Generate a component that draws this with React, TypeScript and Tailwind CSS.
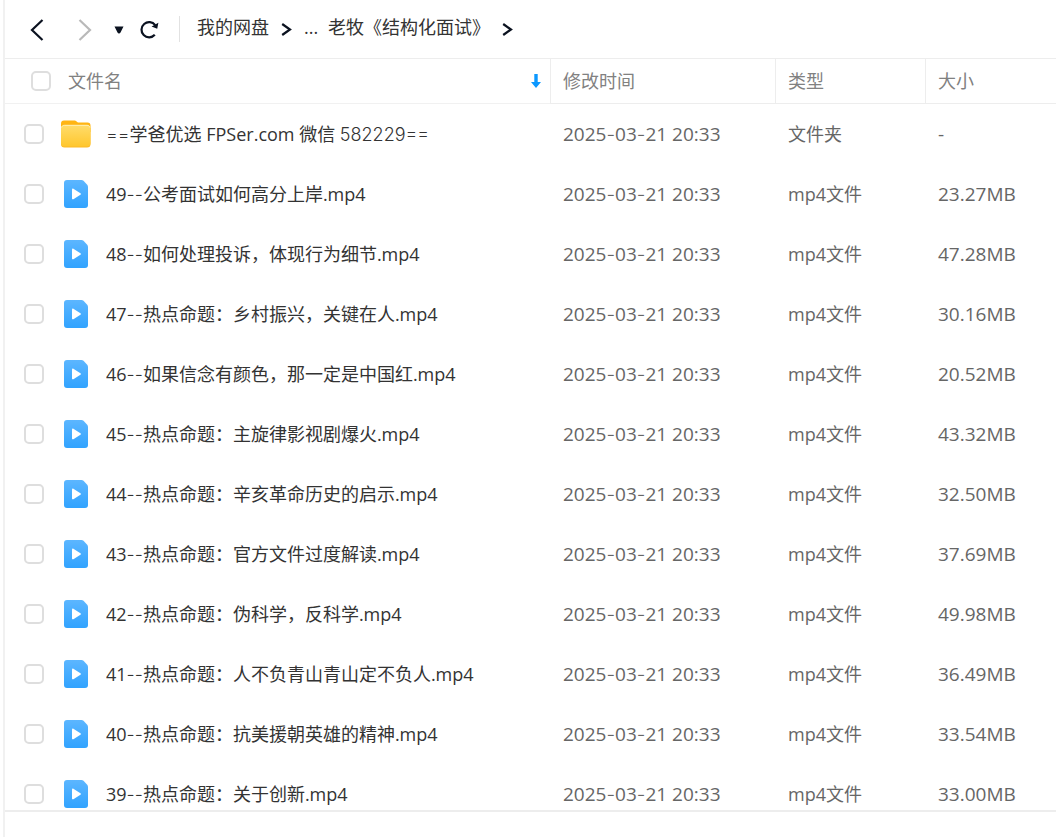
import { Fragment } from "react";

type FileRow = {
  name: string;
  time: string;
  type: string;
  size: string;
  folder?: boolean;
};

const TIME = "2025-03-21 20:33";

const video = (name: string, size: string): FileRow => ({
  name,
  time: TIME,
  type: "mp4文件",
  size,
});

const files: FileRow[] = [
  { name: "==学爸优选 FPSer.com 微信 582229==", time: TIME, type: "文件夹", size: "-", folder: true },
  video("49--公考面试如何高分上岸.mp4", "23.27MB"),
  video("48--如何处理投诉，体现行为细节.mp4", "47.28MB"),
  video("47--热点命题：乡村振兴，关键在人.mp4", "30.16MB"),
  video("46--如果信念有颜色，那一定是中国红.mp4", "20.52MB"),
  video("45--热点命题：主旋律影视剧爆火.mp4", "43.32MB"),
  video("44--热点命题：辛亥革命历史的启示.mp4", "32.50MB"),
  video("43--热点命题：官方文件过度解读.mp4", "37.69MB"),
  video("42--热点命题：伪科学，反科学.mp4", "49.98MB"),
  video("41--热点命题：人不负青山青山定不负人.mp4", "36.49MB"),
  video("40--热点命题：抗美援朝英雄的精神.mp4", "33.54MB"),
  video("39--热点命题：关于创新.mp4", "33.00MB"),
];

function FolderIcon() {
  return (
    <svg width="30" height="28" viewBox="0 0 30 28" aria-hidden="true">
      <defs>
        <linearGradient id="folderFront" x1="0" y1="0" x2="0" y2="1">
          <stop offset="0" stopColor="#ffdc6b" />
          <stop offset="1" stopColor="#ffc72e" />
        </linearGradient>
      </defs>
      <path d="M0 3.5A3 3 0 0 1 3 .5h10c1.2 0 1.8.4 2.6 1l.6.5c.5.4 1 .5 1.8.5h8.500a3 3 0 0 1 3 3V12H0z" fill="#ffb514" />
      <path d="M0 8.500a3.500 3.500 0 0 1 3.500-3.500h22.500a3.500 3.500 0 0 1 3.500 3.500V24a3.500 3.500 0 0 1-3.500 3.500h-22.500A3.500 3.500 0 0 1 0 24z" fill="#fdb926" />
      <path d="M0 8.500a3.500 3.500 0 0 1 3.500-3.500h22.500a3.500 3.500 0 0 1 3.500 3.500V23a3.500 3.500 0 0 1-3.500 3.500h-22.500A3.500 3.500 0 0 1 0 23z" fill="url(#folderFront)" />
      <path d="M.6 7.500C1 6 2 5.300 3.500 5.300h22.500c1.500 0 2.600.8 3 2.200" fill="none" stroke="#fff0b8" strokeWidth="1" />
    </svg>
  );
}

function VideoIcon() {
  return (
    <svg width="24" height="28" viewBox="0 0 24 28" aria-hidden="true">
      <defs>
        <linearGradient id="videoPage" x1="0" y1="0" x2="0" y2="1">
          <stop offset="0" stopColor="#5cb6ff" />
          <stop offset="1" stopColor="#31a3ff" />
        </linearGradient>
      </defs>
      <path d="M3 0h14.500c.8 0 1.400.2 2 .8l3.700 4c.5.6.8 1.200.8 2V25a3 3 0 0 1-3 3H3a3 3 0 0 1-3-3V3a3 3 0 0 1 3-3z" fill="url(#videoPage)" />
      <path d="M8 9.400v9c0 .8.700 1.200 1.400.8l7-4.400c.7-.4.700-1.200 0-1.600l-7-4.500c-.7-.5-1.400-.1-1.400.7z" fill="#fff" />
    </svg>
  );
}

function Chevron({ className, flip = false }: { className: string; flip?: boolean }) {
  return (
    <svg width="14" height="22" viewBox="0 0 14 22" fill="none" stroke="currentColor" strokeWidth="2.200" className={className} aria-hidden="true">
      <path d={flip ? "M12.500 1 2 11l10.500 10" : "M1.500 1 12 11 1.500 21"} />
    </svg>
  );
}

function CrumbArrow() {
  return (
    <svg width="11" height="13" viewBox="0 0 11 13" fill="none" stroke="#0b1220" strokeWidth="2.200" className="mt-1" aria-hidden="true">
      <path d="M1.200 1 9 6.500 1.200 12" />
    </svg>
  );
}

// Dashes, equals signs and the account number come from a wider face
function FileText({ text }: { text: string }) {
  return text.split(/(-+|\d*=+)/).map((part, i) => (
    <Fragment key={i}>
      {i % 2 ? <span className="font-['Inter'] font-light">{part}</span> : part}
    </Fragment>
  ));
}

function Check({ label }: { label: string }) {
  return (
    <input
      type="checkbox"
      aria-label={label}
      className="size-5 shrink-0 appearance-none rounded-[5px] border-2 border-[#dedede] bg-white checked:border-[#06a7ff] checked:bg-[#06a7ff]"
    />
  );
}

function Toolbar() {
  return (
    <header className="flex h-[59px] shrink-0 items-center border-b border-[#ededed] pl-[23px]">
      <button type="button" aria-label="后退" className="flex w-[18px] justify-center pt-0.5">
        <Chevron className="text-[#0b1220]" flip />
      </button>
      <button type="button" aria-label="前进" disabled className="ml-[30px] flex w-[18px] justify-center pt-0.5">
        <Chevron className="text-[#b9b9b9]" />
      </button>
      <button type="button" aria-label="历史" className="ml-5 flex pt-0.5">
        <svg width="10" height="8" viewBox="0 0 10 8" aria-hidden="true">
          <path d="M.5.500h9L6.500 6.500c-.6 1.200-2.400 1.200-3 0z" fill="#0b1220" />
        </svg>
      </button>
      <button type="button" aria-label="刷新" className="ml-4 flex">
        <svg width="19" height="19" viewBox="0 0 19 19" fill="none" aria-hidden="true">
          <path d="M14.800 14.800A7.600 7.600 0 1 1 15.200 5.200" stroke="#0b1220" strokeWidth="2.200" />
          <path d="M18.400 2.800 17.200 8.800 11.600 6.600z" fill="#0b1220" />
        </svg>
      </button>
      <div className="ml-5 h-[26px] w-px bg-[#e2e2e2]" />
      <nav className="ml-[17px] flex items-center gap-3 pb-1 text-lg leading-6 text-[#333]">
        <a href="#root">我的网盘</a>
        <CrumbArrow />
        <a href="#parent" className="w-3">...</a>
        <a href="#current">老牧《结构化面试》</a>
        <CrumbArrow />
      </nav>
    </header>
  );
}

export default function App() {
  return (
    <main className="ml-[3px] flex h-screen flex-col overflow-hidden border-l-2 border-[#f1f1f1] bg-white font-['Open_Sans','Noto_Sans_CJK_SC',sans-serif]">
      <Toolbar />
      <div className="min-h-0 flex-1 overflow-hidden">
        <table className="w-full table-fixed border-separate border-spacing-0 text-left text-lg leading-6">
          <colgroup>
            <col />
            <col className="w-[225px]" />
            <col className="w-[150px]" />
            <col className="w-[131px]" />
          </colgroup>
          <thead className="text-[#818181]">
            <tr className="h-[45px]">
              <th className="border-b border-[#f1f1f1] p-0 font-normal">
                <div className="flex items-center pr-[9px] pl-[26px]">
                  <Check label="全选" />
                  <span className="ml-[17px] flex-1">文件名</span>
                  <svg width="10" height="14" viewBox="0 0 10 14" fill="#0b98ff" aria-hidden="true">
                    <path d="M3.300 0h3.400v8H10L5 14 0 8h3.300z" />
                  </svg>
                </div>
              </th>
              <th className="border-b border-l border-[#ededed] px-3 py-0 font-normal">修改时间</th>
              <th className="border-b border-l border-[#ededed] px-3 py-0 font-normal">类型</th>
              <th className="border-b border-l border-[#ededed] px-3 py-0 font-normal">大小</th>
            </tr>
          </thead>
          <tbody className="text-[#666]">
            {files.map((file) => (
              <tr key={file.name} className="h-[60px]">
                <td className="p-0">
                  <div className="flex items-center pl-[19px]">
                    <Check label={file.name} />
                    <span className="ml-4 flex w-[31px] justify-center">
                      {file.folder ? <FolderIcon /> : <VideoIcon />}
                    </span>
                    <a href="#file" className="ml-[15px] truncate text-[#333]">
                      <FileText text={file.name} />
                    </a>
                  </div>
                </td>
                <td className="px-[13px] py-0 text-[19px]">
                  <FileText text={file.time} />
                </td>
                <td className="px-[13px] py-0">{file.type}</td>
                <td className="px-[13px] py-0 text-[19px]">{file.size}</td>
              </tr>
            ))}
          </tbody>
        </table>
      </div>
      <footer className="h-[27px] shrink-0 border-t-2 border-[#ededed]" />
    </main>
  );
}
